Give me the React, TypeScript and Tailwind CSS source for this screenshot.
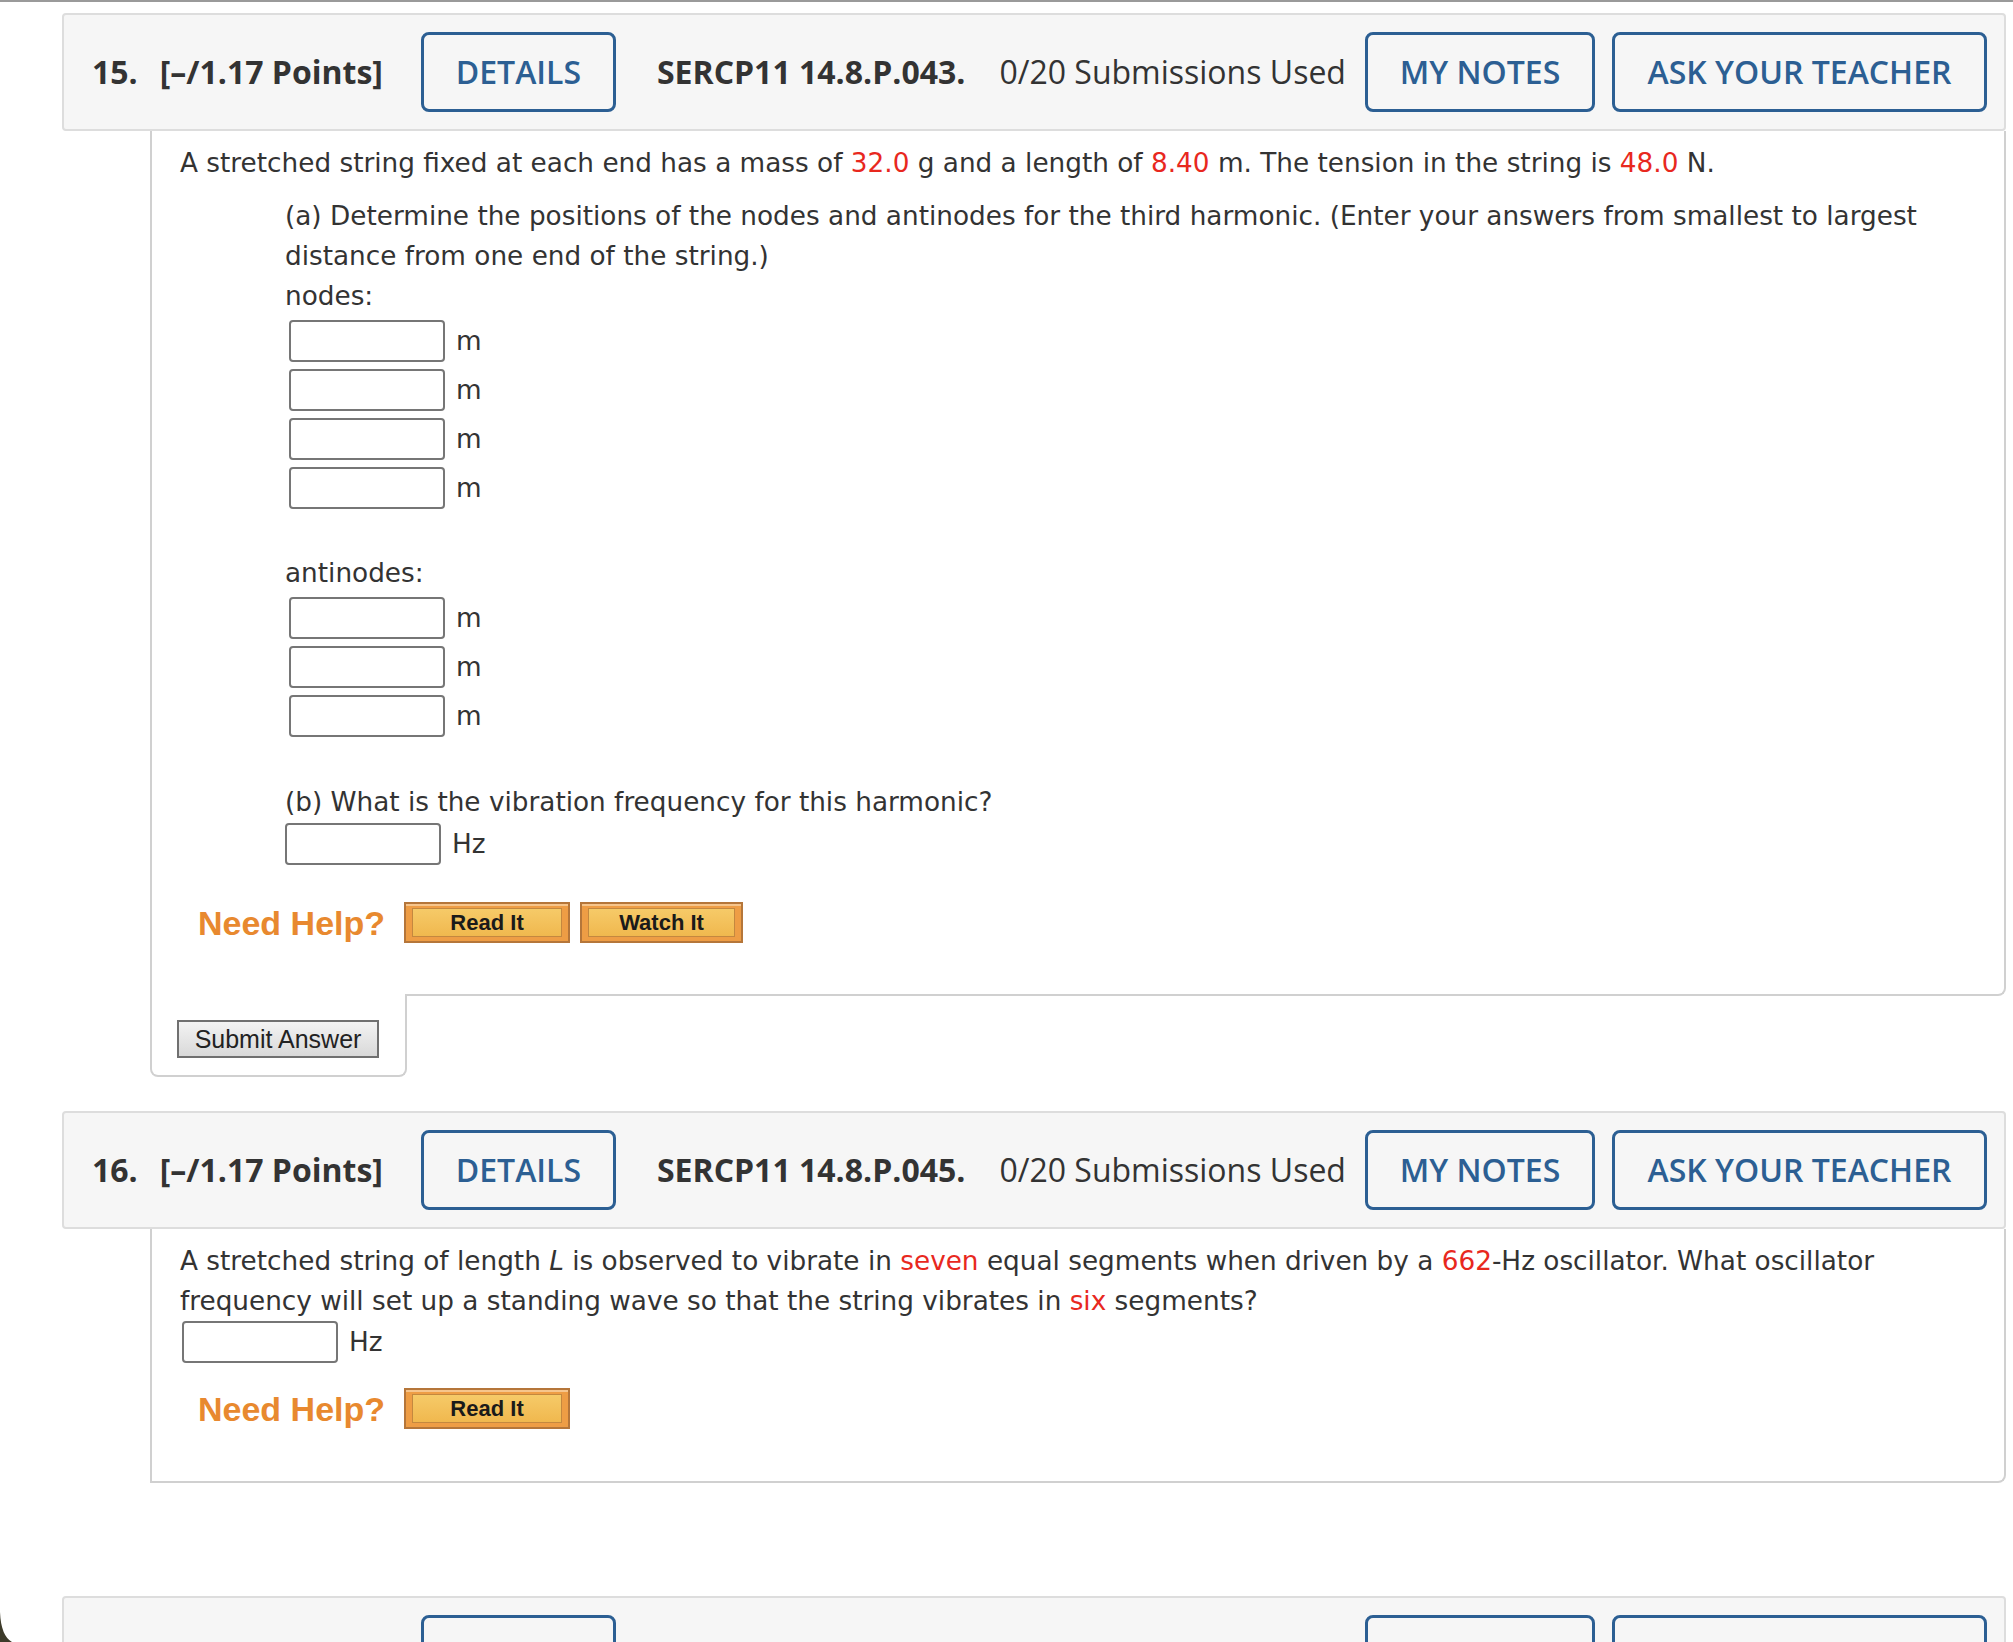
import React from 'react';

function Red({ children }: { children: React.ReactNode }) {
  return <span className="text-[#e8281e]">{children}</span>;
}

function HeaderButton({ className, children }: { className: string; children?: React.ReactNode }) {
  return (
    <div
      className={`flex h-[80px] shrink-0 items-center justify-center rounded-[8px] border-[3px] border-[#2c5f93] font-semibold text-[#2c5f93] ${className}`}
    >
      {children}
    </div>
  );
}

function QuestionHeader({ num, code }: { num: string; code: string }) {
  return (
    <div className="flex h-[118px] items-center rounded-[4px] border-2 border-[#dddddd] bg-[#f6f6f6] pl-[28px] pr-[17px] font-['Open_Sans',sans-serif] text-[32px] text-[#333]">
      <span className="font-bold">{num}.</span>
      <span className="ml-[22px] font-bold">[–/1.17 Points]</span>
      <HeaderButton className="ml-[38px] w-[195px]">DETAILS</HeaderButton>
      <span className="ml-[41px] font-bold">{code}</span>
      <span className="ml-[34px]">0/20 Submissions Used</span>
      <HeaderButton className="ml-auto w-[230px]">MY NOTES</HeaderButton>
      <HeaderButton className="ml-[17px] w-[375px]">ASK YOUR TEACHER</HeaderButton>
    </div>
  );
}

// the next question's header only shows the top of its buttons
function CutHeader() {
  return (
    <div className="flex h-[118px] items-start rounded-[4px] border-2 border-[#dddddd] bg-[#f6f6f6] pl-[28px] pr-[17px] pt-[17px]">
      <HeaderButton className="ml-[329px] w-[195px]" />
      <HeaderButton className="ml-auto w-[230px]" />
      <HeaderButton className="ml-[17px] w-[375px]" />
    </div>
  );
}

function AnswerInput({ unit, inset }: { unit: string; inset: string }) {
  return (
    <div className="flex h-[42px] items-center">
      <input
        type="text"
        readOnly
        className={`h-[42px] w-[156px] rounded-[4px] border-2 border-[#767676] bg-white ${inset}`}
      />
      <span className="ml-[11px]">{unit}</span>
    </div>
  );
}

function HelpButton({ label, width }: { label: string; width: string }) {
  return (
    <div
      className={`flex h-[41px] ${width} border-2 border-[#b5763a] bg-[#ee9d45] px-[6px] py-[4px] shadow-[inset_0_2px_0_#f6c58c]`}
    >
      <div className="flex flex-1 items-center justify-center border border-[#c4883f] bg-linear-to-b from-[#f6ca68] to-[#f0b84e] font-['Liberation_Sans',sans-serif] text-[22px] font-bold text-[#1a1a1a]">
        {label}
      </div>
    </div>
  );
}

function NeedHelp({ watch }: { watch?: boolean }) {
  return (
    <div className="ml-[18px] flex h-[41px] items-center">
      <span className="font-['Liberation_Sans',sans-serif] text-[34px] font-bold leading-none text-[#e8892f]">
        Need Help?
      </span>
      <div className="ml-[19px] flex gap-[10px]">
        <HelpButton label="Read It" width="w-[166px]" />
        {watch && <HelpButton label="Watch It" width="w-[163px]" />}
      </div>
    </div>
  );
}

export default function App() {
  return (
    <div className="relative h-[1642px] overflow-hidden bg-white">
      <div className="h-[2px] bg-[#9a9a9a]" />
      <div className="pl-[62px] pr-[7px] pt-[11px]">
        {/* question 15 */}
        <QuestionHeader num="15" code="SERCP11 14.8.P.043." />
        <div className="ml-[88px] rounded-br-[8px] border-x-2 border-b-2 border-[#d0d0d0] pb-[51px] pl-[28px] pr-[28px] pt-[12px] font-['DejaVu_Sans',sans-serif] text-[26.3px] leading-[40px] text-[#333]">
          <p>
            A stretched string fixed at each end has a mass of <Red>32.0</Red> g and a length of{' '}
            <Red>8.40</Red> m. The tension in the string is <Red>48.0</Red> N.
          </p>
          <div className="ml-[105px] mt-[13px]">
            <p>
              (a) Determine the positions of the nodes and antinodes for the third harmonic. (Enter your answers
              from smallest to largest distance from one end of the string.)
            </p>
            <p>nodes:</p>
            {[0, 1, 2, 3].map((i) => (
              <div key={i} className="flex h-[49px] items-center">
                <AnswerInput unit="m" inset="ml-[4px]" />
              </div>
            ))}
            <div className="h-[41px]" />
            <p>antinodes:</p>
            {[0, 1, 2].map((i) => (
              <div key={i} className="flex h-[49px] items-center">
                <AnswerInput unit="m" inset="ml-[4px]" />
              </div>
            ))}
            <div className="h-[42px]" />
            <p>(b) What is the vibration frequency for this harmonic?</p>
            <div className="mt-[1px]">
              <AnswerInput unit="Hz" inset="ml-0" />
            </div>
          </div>
          <div className="mt-[37px]">
            <NeedHelp watch />
          </div>
        </div>
        <div className="relative -mt-[2px] ml-[88px] w-[257px] rounded-b-[8px] border-x-2 border-b-2 border-[#d0d0d0] bg-white pb-[17px] pl-[25px] pt-[26px]">
          <button className="block h-[38px] w-[202px] border-2 border-[#707070] bg-linear-to-b from-[#f3f3f3] to-[#d9d9d9] font-['Liberation_Sans',sans-serif] text-[25px] leading-none text-[#222]">
            Submit Answer
          </button>
        </div>

        {/* question 16 */}
        <div className="mt-[34px]">
          <QuestionHeader num="16" code="SERCP11 14.8.P.045." />
        </div>
        <div className="ml-[88px] rounded-br-[8px] border-x-2 border-b-2 border-[#d0d0d0] pb-[52px] pl-[28px] pr-[28px] pt-[12px] font-['DejaVu_Sans',sans-serif] text-[26.3px] leading-[40px] text-[#333]">
          <p>
            A stretched string of length <i>L</i> is observed to vibrate in <Red>seven</Red> equal segments when
            driven by a <Red>662</Red>-Hz oscillator. What oscillator frequency will set up a standing wave so that
            the string vibrates in <Red>six</Red> segments?
          </p>
          <AnswerInput unit="Hz" inset="ml-[2px]" />
          <div className="mt-[25px]">
            <NeedHelp />
          </div>
        </div>

        {/* question 17, cut off by the window */}
        <div className="mt-[113px]">
          <CutHeader />
        </div>
      </div>

      <svg className="fixed bottom-0 left-0" width="12" height="30" viewBox="0 0 12 30">
        <path d="M0 0 Q1 24 12 30 L0 30 Z" fill="#3d3b2a" />
      </svg>
    </div>
  );
}
